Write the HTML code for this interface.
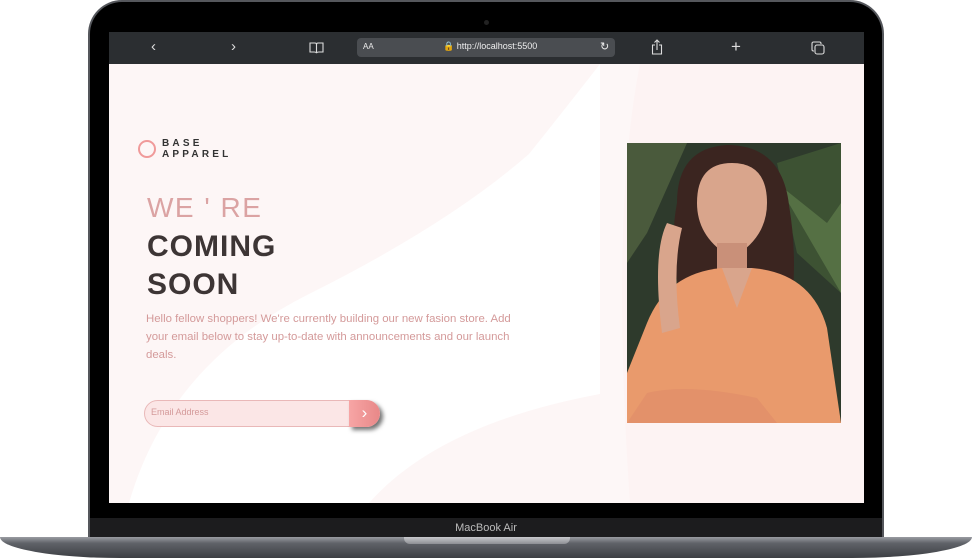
<!DOCTYPE html>
<html><head><style>
*{margin:0;padding:0;box-sizing:border-box}
body{width:972px;height:558px;background:#fff;position:relative;overflow:hidden;font-family:"Liberation Sans",sans-serif}
.frame{position:absolute;left:88px;top:0;width:796px;height:545px;background:#000;border-radius:34px 34px 0 0;border:2px solid #55575c;border-bottom:none}
.cam{position:absolute;left:394px;top:18px;width:5px;height:5px;border-radius:50%;background:#222}
.screen{position:absolute;left:109px;top:32px;width:755px;height:471px;background:#fff;overflow:hidden}
.bar{position:absolute;left:0;top:0;width:755px;height:32px;background:#2b2e31;color:#ddd}
.url{position:absolute;left:248px;top:6px;width:258px;height:19px;background:#4a4d51;border-radius:4px;font-size:9px;color:#eee}
.content{position:absolute;left:0;top:32px;width:755px;height:439px;background:#fdf6f6}
.right{position:absolute;left:491px;top:0;width:264px;height:439px;background:#fdf3f3}
.chin{position:absolute;left:90px;top:518px;width:792px;height:20px;background:#1c1c1e;color:#bbb;font-size:11px;text-align:center;line-height:20px}
.base{position:absolute;left:0;top:537px;width:972px;height:21px;background:linear-gradient(#9a9ca2,#5f6268 30%,#3c3e43);border-radius:0 0 120px 120px/0 0 21px 21px}
.notch{position:absolute;left:404px;top:537px;width:166px;height:7px;background:linear-gradient(#c8c9cd,#8d8f94);border-radius:0 0 6px 6px}
.t{position:absolute;font-family:"Liberation Sans",sans-serif}
</style></head><body>
<div class="frame"><div class="cam"></div></div>
<div class="screen">
 <div class="bar">
  <div class="t" style="left:42px;top:6px;font-size:15px">&#8249;</div>
  <div class="t" style="left:122px;top:6px;font-size:15px">&#8250;</div>
  <svg style="position:absolute;left:200px;top:10px" width="15" height="12" viewBox="0 0 15 12"><path d="M1 1h5q1.5 0 1.5 1.5V11Q7 10 5 10H1zM14 1H9Q7.5 1 7.5 2.5V11Q8 10 10 10h4z" fill="none" stroke="#ddd" stroke-width="1.1"/></svg>
  <div class="url"><span class="t" style="left:6px;top:4px;font-size:8px">AA</span><span class="t" style="left:86px;top:3px">&#128274; http://localhost:5500</span><span class="t" style="left:243px;top:2px;font-size:11px">&#8635;</span></div>
  <svg style="position:absolute;left:542px;top:7px" width="12" height="16" viewBox="0 0 12 16"><path d="M4 6H1.5v9h9V6H8M6 11V1M3.5 3.5L6 1l2.5 2.5" fill="none" stroke="#ddd" stroke-width="1.1"/></svg>
  <div class="t" style="left:622px;top:5px;font-size:17px;font-weight:300">+</div>
  <svg style="position:absolute;left:702px;top:9px" width="14" height="14"><rect x="4" y="4" width="9" height="9" rx="2" fill="none" stroke="#ddd" stroke-width="1.1"/><path d="M3 10H2.5A1.5 1.5 0 0 1 1 8.5V2.5A1.5 1.5 0 0 1 2.5 1h6A1.5 1.5 0 0 1 10 2.5V3" fill="none" stroke="#ddd" stroke-width="1.1"/></svg>
 </div>
 <div class="content">
  <svg style="position:absolute;left:0;top:0" width="491" height="439"><path d="M491 0V439H20Q60 300 200 230T420 90Q460 40 491 0z" fill="#fff"/><path d="M491 439H260Q330 360 491 330z" fill="#fdf6f6"/></svg>
  <div class="right"><svg width="264" height="439"><path d="M0 0h40Q10 150 30 439H0z" fill="#fdf7f7"/></svg></div>
  <div style="position:absolute;left:29px;top:76px;width:18px;height:18px;border:2px solid #f09a9a;border-radius:50%"></div>
  <div class="t" style="left:53px;top:74px;font-size:10px;font-weight:bold;letter-spacing:3.2px;color:#333;line-height:11px">BASE<br>APPAREL</div>
  <div class="t" style="left:38px;top:128px;font-size:28px;letter-spacing:1.5px;color:#dba3a3;font-weight:300">WE ' RE</div>
  <div class="t" style="left:38px;top:164px;font-size:30px;letter-spacing:1px;color:#3d3535;font-weight:bold;line-height:38px">COMING<br>SOON</div>
  <div class="t" style="left:37px;top:246px;width:375px;font-size:11.4px;line-height:18px;color:#d49a9a">Hello fellow shoppers! We're currently building our new fasion store. Add your email below to stay up-to-date with announcements and our launch deals.</div>
  <div style="position:absolute;left:35px;top:336px;width:235px;height:27px;border:1px solid #e9b8b8;border-radius:14px;background:#fbe6e6"></div>
  <div class="t" style="left:42px;top:343px;font-size:9px;color:#d49a9a">Email Address</div>
  <div style="position:absolute;left:240px;top:336px;width:31px;height:27px;border-radius:0 14px 14px 0;background:linear-gradient(90deg,#f7a5a5,#e88888);box-shadow:3px 3px 4px rgba(0,0,0,.55);color:#fff;font-size:17px;text-align:center;line-height:25px">&#8250;</div>
  <svg style="position:absolute;left:518px;top:79px" width="214" height="280" viewBox="0 0 214 280">
   <rect width="214" height="280" fill="#2e3a2c"/>
   <path d="M0 0h60L20 90 0 120z" fill="#4a5a3c"/><path d="M214 0v150L170 110 150 20z" fill="#3d5233"/>
   <path d="M150 40L200 80 214 60v90z" fill="#557044"/>
   <path d="M50 60Q50 5 100 2q55 0 62 60 10 60 0 120H60Q40 110 50 60z" fill="#3b2520"/>
   <path d="M70 60q0-40 35-40t35 40q0 35-35 55-35-20-35-55z" fill="#d9a58c"/>
   <rect x="90" y="100" width="30" height="35" fill="#c99079"/>
   <path d="M20 180Q40 130 95 125l30 0q60 5 75 60l14 95H0V230z" fill="#e99a6c"/>
   <path d="M95 125l15 40 15-40z" fill="#d9a58c"/>
   <path d="M20 250q40-10 110 5l20 25H0z" fill="#e3916a"/>
   <path d="M35 190Q25 110 40 80l15 5q-10 40-2 100z" fill="#d9a58c"/>
  </svg>
 </div>
</div>
<div class="chin">MacBook Air</div>
<div class="base"></div>
<div class="notch"></div>
</body></html>
